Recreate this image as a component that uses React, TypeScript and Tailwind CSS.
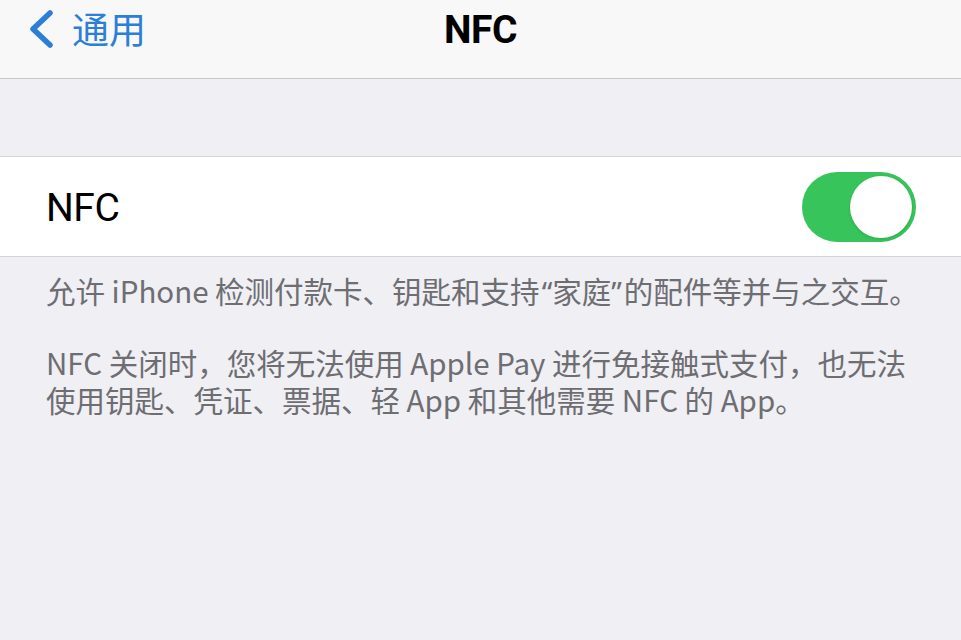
import React from "react";

const cjk = { fontFamily: '"Noto Sans CJK SC", "Noto Sans", sans-serif' };
const roboto = { fontFamily: 'Roboto, "Noto Sans CJK SC", sans-serif' };
const quote = { fontFamily: '"Noto Sans", sans-serif' };

export default function App() {
  return (
    <div className="w-[961px] h-[640px] bg-[#efeff4] overflow-hidden">
      <header className="h-[79px] bg-[#f8f8f8] border-b border-[#c8c8cc] grid grid-cols-[1fr_auto_1fr] items-center pb-[18px]">
        <div className="flex items-center pl-[29px] pb-[3px]">
          <svg width="25" height="38" viewBox="0 0 25 38" className="shrink-0">
            <path d="M21 3 L4 19 L21 35" fill="none" stroke="#2c7fd6" strokeWidth="5.5" strokeLinecap="round" strokeLinejoin="round" />
          </svg>
          <span className="ml-[18px] text-[37px] leading-none text-[#2c7fd6]" style={cjk}>通用</span>
        </div>
        <div className="text-[39px] font-bold leading-none text-black tracking-[-0.5px]" style={roboto}>NFC</div>
        <div />
      </header>

      <div className="h-[77px]" />

      <div className="h-[101px] bg-white border-y border-[#d4d4d8] flex items-center justify-between pl-[46px] pr-[45px]">
        <span className="text-[39px] leading-none text-black tracking-[-0.5px] pt-[3px]" style={roboto}>NFC</span>
        <div className="w-[114px] h-[70px] rounded-full bg-[#37c45a] flex items-center justify-end pr-[4px]">
          <div className="w-[62px] h-[62px] rounded-full bg-white shadow-[0_1px_3px_rgba(0,0,0,0.15)]" />
        </div>
      </div>

      <div className="pl-[46px] pt-[15px] text-[29.5px] leading-[37px] text-[#6d6d72] whitespace-nowrap" style={cjk}>
        <p>
          允许 iPhone 检测付款卡、钥匙和支持<span className="ml-[2px]" style={quote}>“</span>家庭<span className="mr-[2px]" style={quote}>”</span>的配件等并与之交互。
        </p>
        <p className="mt-[34px]">
          NFC 关闭时，您将无法使用 Apple Pay 进行免接触式支付，也无法
          <br />
          使用钥匙、凭证、票据、轻 App 和其他需要 NFC 的 App。
        </p>
      </div>
    </div>
  );
}
